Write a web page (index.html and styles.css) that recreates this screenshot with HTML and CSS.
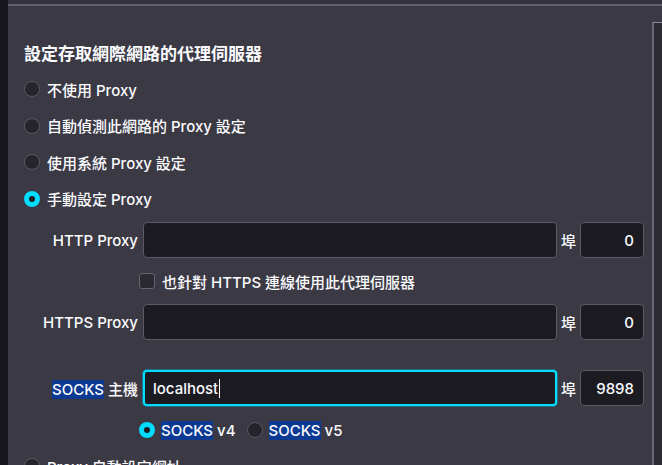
FILE: index.html
```html
<!DOCTYPE html>
<html lang="zh-Hant">
<head>
<meta charset="utf-8">
<title>連線設定</title>
<link rel="stylesheet" href="styles.css">
</head>
<body>
<div class="window">
  <div class="edge-left"></div>
  <div class="main">
    <div class="topbar"></div>
    <div class="body-row">
      <div class="content">
        <h1 class="title">設定存取網際網路的代理伺服器</h1>
        <div class="radio-list">
          <div class="radio-row"><span class="radio"></span><span>不使用 Proxy</span></div>
          <div class="radio-row"><span class="radio"></span><span>自動偵測此網路的 Proxy 設定</span></div>
          <div class="radio-row"><span class="radio"></span><span>使用系統 Proxy 設定</span></div>
          <div class="radio-row"><span class="radio is-checked"></span><span>手動設定 Proxy</span></div>
        </div>

        <div class="field-row field-http">
          <span class="field-label">HTTP Proxy</span>
          <div class="input input-host"></div>
          <span class="port-label">埠</span>
          <div class="input input-port">0</div>
        </div>

        <div class="check-row">
          <span class="checkbox"></span>
          <span>也針對 HTTPS 連線使用此代理伺服器</span>
        </div>

        <div class="field-row field-https">
          <span class="field-label">HTTPS Proxy</span>
          <div class="input input-host"></div>
          <span class="port-label">埠</span>
          <div class="input input-port">0</div>
        </div>

        <div class="field-row field-socks">
          <span class="field-label"><span class="hl">SOCKS</span> 主機</span>
          <div class="input input-host is-focused"><span class="value">localhost</span><span class="caret"></span></div>
          <span class="port-label">埠</span>
          <div class="input input-port">9898</div>
        </div>

        <div class="socks-row">
          <div class="socks-opt"><span class="radio is-checked"></span><span><span class="hl">SOCKS</span> v4</span></div>
          <div class="socks-opt"><span class="radio"></span><span><span class="hl">SOCKS</span> v5</span></div>
        </div>

        <div class="radio-row last-row"><span class="radio"></span><span>Proxy 自動設定網址</span></div>
      </div>
      <div class="edge-right"></div>
    </div>
  </div>
</div>
</body>
</html>
```

FILE: styles.css
```css
html, body {
  margin: 0;
  padding: 0;
}

body {
  width: 662px;
  height: 465px;
  overflow: hidden;
  background: #3a3944;
  color: #fbfbfe;
  font-family: Inter, "Noto Sans CJK TC", sans-serif;
  font-size: 15px;
  font-weight: 500;
}

.window {
  display: flex;
  height: 465px;
}

.edge-left {
  width: 8px;
  flex: none;
  background: #18171d;
}

.main {
  flex: 1;
  display: flex;
  flex-direction: column;
  min-width: 0;
}

.topbar {
  height: 4px;
  flex: none;
  background: #33323c;
  border-bottom: 2px solid #62616b;
}

.body-row {
  flex: 1;
  display: flex;
  min-height: 0;
}

.content {
  flex: 1;
  padding: 37px 0 0 16px;
}

.edge-right {
  width: 8px;
  flex: none;
  margin-top: 16px;
  background: #2c2b33;
  border-left: 2px solid #6a6973;
  border-top: 1px solid #8a8992;
}

.title {
  margin: 0 0 6px;
  font-size: 17px;
  line-height: 22px;
  font-weight: 700;
}

.radio-row {
  height: 36.5px;
  display: flex;
  align-items: center;
  gap: 7px;
}

.radio {
  width: 16px;
  height: 16px;
  flex: none;
  box-sizing: border-box;
  border-radius: 50%;
  background: #25242c;
  border: 1px solid #5a5963;
}

.radio.is-checked {
  background: #1c1b22;
  border: 5px solid #00ddff;
}

.field-row {
  display: flex;
  align-items: center;
  height: 36px;
}

.field-http { margin-top: 5px; }
.field-https { margin-top: 15px; }
.field-socks { margin-top: 30px; }

.field-label {
  width: 119px;
  flex: none;
  box-sizing: border-box;
  padding-right: 5px;
  text-align: right;
  white-space: nowrap;
}

.input {
  height: 36px;
  box-sizing: border-box;
  background: #1c1b22;
  border: 1px solid #5b5a64;
  border-radius: 4px;
  display: flex;
  align-items: center;
}

.input-host {
  width: 414px;
  padding-left: 9px;
}

.input-host.is-focused {
  border: 2px solid #00ddff;
  box-shadow: 0 0 0 1px rgba(0, 221, 255, 0.35);
  padding-left: 8px;
}

.caret {
  width: 1px;
  height: 19px;
  margin-left: 1px;
  background: #fbfbfe;
}

.port-label {
  width: 23px;
  flex: none;
  text-align: center;
}

.input-port {
  width: 64px;
  justify-content: flex-end;
  padding-right: 9px;
}

.check-row {
  display: flex;
  align-items: center;
  gap: 7px;
  height: 16px;
  margin: 15px 0 0 115px;
}

.checkbox {
  width: 16px;
  height: 16px;
  flex: none;
  box-sizing: border-box;
  border-radius: 3px;
  background: #2b2a33;
  border: 1px solid #66656f;
}

.hl {
  background: #0c3a93;
}

.socks-row {
  display: flex;
  align-items: center;
  gap: 11px;
  height: 16px;
  margin: 16px 0 0 115px;
}

.socks-opt {
  display: flex;
  align-items: center;
  gap: 6px;
}

.last-row {
  margin-top: 10px;
}
```
